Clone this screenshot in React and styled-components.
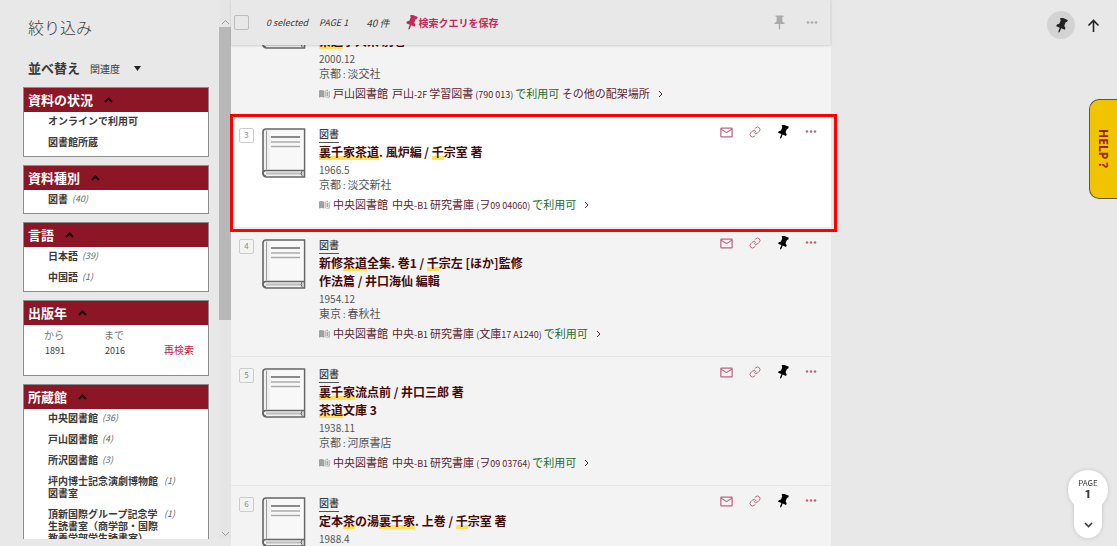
import React from 'react';
import styled, { createGlobalStyle, css } from 'styled-components';
import { MdPushPin, MdMailOutline } from 'react-icons/md';
import { Link as LinkIcon } from 'lucide-react';

const GlobalStyle = createGlobalStyle`
    * {
        box-sizing: border-box;
    }

    body {
        margin: 0;
        background: #e8e8e8;
        color: #3a3a3a;
        font-family: 'Noto Sans CJK JP', 'Noto Sans', sans-serif;
        font-size: 11px;
    }

    button, input, select {
        margin: 0;
        padding: 0;
        border: 0;
        background: none;
        color: inherit;
        font: inherit;
    }

    a {
        color: inherit;
        text-decoration: none;
    }
`;

const Page = styled.div`
    display: grid;
    grid-template-columns: 231px minmax(0, 600px) minmax(0, 1fr);
    height: 100vh;
    overflow: hidden;
`;

/* ---------- sidebar ---------- */

const Sidebar = styled.aside`
    display: flex;
    height: 100vh;
    padding-bottom: 7px;
`;

const Filters = styled.div`
    flex: 1;
    min-width: 0;
    padding: 14px 10px 0 23px;
    overflow: hidden;
`;

const SidebarTitle = styled.h2`
    margin: 0 0 14px 5px;
    font-size: 16px;
    font-weight: 300;
    line-height: 26px;
`;

const SortRow = styled.div`
    display: flex;
    align-items: center;
    gap: 10px;
    height: 26px;
    margin: 0 0 7px 5px;

    label {
        font-size: 13px;
        font-weight: 700;
    }
`;

const SortSelect = styled.span`
    display: flex;
    align-items: center;
    padding-top: 3px;

    select {
        appearance: none;
        width: 44px;
        font-size: 10px;
    }
`;

const Panel = styled.section`
    margin-bottom: 8px;
    border: 1px solid #8c8c8c;
    background: #fff;
`;

const PanelHead = styled.button`
    display: flex;
    align-items: center;
    gap: 11px;
    width: 100%;
    height: 24px;
    padding-left: 4px;
    background: #8c1526;
    color: #fff;
    font-size: 13px;
    font-weight: 700;
    line-height: 24px;

    svg {
        color: #1c0508;
    }
`;

const FacetList = styled.ul`
    display: flex;
    flex-direction: column;
    gap: 9px;
    margin: 0;
    padding: 3px 0 8px 24px;
    list-style: none;
    font-size: 10px;
    line-height: 12px;

    li {
        display: flex;
        gap: 4px;
    }

    a {
        max-width: 112px;
        font-weight: 700;
    }

    em {
        color: #666;
        font-size: 9px;
    }
`;

const YearForm = styled.form`
    display: grid;
    grid-template-columns: 60px 60px 1fr;
    align-items: end;
    height: 50px;
    padding: 2px 0 15px 20px;
    font-size: 10px;

    label {
        display: block;
        color: #777;
        line-height: 15px;
    }

    input {
        display: block;
        width: 40px;
        height: 18px;
        padding-left: 1px;
        font-size: 9px;
        line-height: 18px;
    }

    button {
        justify-self: start;
        color: #b8174c;
        line-height: 20px;
    }
`;

const Scrollbar = styled.div`
    display: flex;
    flex-direction: column;
    align-items: center;
    width: 12px;
    padding: 19px 0 2px;
    background: #e5e5e5;
    color: #999;
`;

const Thumb = styled.div`
    flex: 0 1 293px;
    width: 12px;
    margin: 2px 0 auto;
    background: #b8b8b8;
`;

/* ---------- results ---------- */

const Main = styled.main`
    min-width: 0;
    height: 100vh;
`;

const Toolbar = styled.header`
    position: relative;
    z-index: 2;
    display: flex;
    align-items: center;
    height: 45px;
    padding: 0 12px 0 3px;
    border-right: 1px solid #dcdcdc;
    background: #e8e8e8;
    box-shadow: 0 1px 2px rgba(0, 0, 0, 0.15);
    font-size: 10px;

    input {
        appearance: none;
        width: 15px;
        height: 15px;
        border: 1px solid #bcbcbc;
        border-radius: 2px;
    }
`;

const Status = styled.span`
    margin-left: ${props => props.$gap}px;
    font-size: ${props => (props.$large ? '10px' : '9px')};
    font-style: italic;
`;

const SaveQuery = styled.button`
    display: flex;
    align-items: center;
    margin-left: 14px;
    color: #c22a5c;
    font-weight: 700;
`;

const ToolbarActions = styled.div`
    display: flex;
    align-items: center;
    gap: 18px;
    margin-left: auto;
    color: #aaa;
`;

const IconButton = styled.button`
    display: flex;
    align-items: center;
    justify-content: center;
    height: 16px;
    color: ${props => props.$color || 'inherit'};
`;

// the list is scrolled so that its first record is mostly under the toolbar
const Results = styled.ol`
    margin: -57px 0 0;
    padding: 0;
    list-style: none;
`;

const Record = styled.li`
    position: relative;
    display: grid;
    grid-template-columns: 14px 44px minmax(0, 1fr) auto;
    column-gap: 9px;
    padding: 11px 14px 15px 8px;
    border-bottom: 1px solid #e4e4e4;
    background: #f3f3f3;

    ${props => props.$active && css`
        background: #fff;

        &::after {
            content: '';
            position: absolute;
            z-index: 1;
            inset: -3px -6px -5px -1px;
            border: 3px solid #f00;
            pointer-events: none;
        }
    `}
`;

const RecordNumber = styled.span`
    width: 15px;
    height: 15px;
    border: 1px solid #ccc;
    border-radius: 2px;
    color: #888;
    font-size: 8px;
    line-height: 12px;
    text-align: center;
`;

const RecordBody = styled.div`
    padding-left: 4px;
    line-height: 14px;
`;

const Kind = styled.span`
    display: block;
    width: fit-content;
    height: 15px;
    border-bottom: 1px solid #555;
    font-size: 10px;
    font-weight: 500;
    line-height: 12px;
`;

const Title = styled.h3`
    margin: 0 0 2px;
    color: #450a0a;
    font-size: 12px;
    font-weight: 700;
    line-height: 18px;

    a {
        display: block;
    }

    mark {
        background: linear-gradient(transparent 13px, #ffe25c 13px, #ffe25c 17px, transparent 17px);
        color: inherit;
    }
`;

const Published = styled.div`
    color: #555;
    font-size: ${props => (props.$date ? '10px' : '11px')};
`;

const Latin = styled.span`
    font-size: 9px;
    line-height: 0;
`;

const Location = styled.a`
    display: flex;
    align-items: center;
    gap: 3px;
    height: 16px;
    margin-top: 5px;
    color: #5c2430;
    white-space: pre;

    b {
        color: #256b2c;
        font-weight: 400;
    }

    > svg:last-child {
        margin: 2px 0 0 5px;
    }
`;

const RecordActions = styled.div`
    display: flex;
    align-items: center;
    gap: 15px;
    height: 8px;
`;

/* ---------- right side ---------- */

const Side = styled.div`
    display: flex;
    flex-direction: column;
    align-items: flex-end;
    height: 100vh;
`;

const TopActions = styled.div`
    display: flex;
    align-items: center;
    gap: 12px;
    padding: 11px 17px 0 0;
`;

const RoundButton = styled.button`
    display: flex;
    align-items: center;
    justify-content: center;
    width: 28px;
    height: 28px;
    border-radius: 50%;
    background: #d3d3d3;
    color: #222;
`;

const HelpTab = styled.button`
    width: 28px;
    height: 100px;
    margin-top: 60px;
    border: 1px solid #5f5a35;
    border-right: 0;
    border-radius: 10px 0 0 10px;
    background: #f0c400;
    color: #98241c;
    font-family: 'Open Sans', sans-serif;
    font-size: 12px;
    font-weight: 700;
    writing-mode: vertical-rl;
`;

const Pager = styled.div`
    display: flex;
    flex-direction: column;
    align-items: center;
    margin: auto 9px 8px 0;
    filter: drop-shadow(0 0 2px rgba(0, 0, 0, 0.15));
`;

const PageBadge = styled.div`
    display: flex;
    flex-direction: column;
    align-items: center;
    justify-content: center;
    width: 40px;
    height: 40px;
    border-radius: 50%;
    background: #fff;
    font-size: 8px;
    line-height: 10px;

    strong {
        font-size: 13px;
        line-height: 14px;
    }
`;

const NextPage = styled.button`
    display: flex;
    align-items: flex-end;
    justify-content: center;
    width: 28px;
    height: 40px;
    margin-top: -12px;
    padding-bottom: 10px;
    border-radius: 0 0 14px 14px;
    background: #fff;
`;

/* ---------- icons ---------- */

const Chevron = ({ d, width = 9, height = 6, stroke = 2 }) => (
    <svg width={width} height={height} viewBox={`0 0 ${width} ${height}`} fill="none" stroke="currentColor" strokeWidth={stroke}>
        <path d={d} />
    </svg>
);

const UP = 'M1 5l3.5-3.5L8 5';
const DOWN = 'M1 1l3.5 3.5L8 1';

const Dots = () => (
    <svg width="12" height="4" viewBox="0 0 12 4" fill="currentColor">
        <circle cx="2" cy="1.5" r="1.3" />
        <circle cx="6" cy="1.5" r="1.3" />
        <circle cx="10" cy="1.5" r="1.3" />
    </svg>
);

const PinShape = styled.svg`
    display: block;
    flex: none;
`;

const Pin = ({ size = 14 }) => (
    <PinShape width={size} height={size} viewBox="0 0 14 14" fill="currentColor">
        <g transform="rotate(22 7 7)">
            <path d="M3.500 0h7v2l-1 .5v3.800l1.800 1.500V9.500H7.700V13L7 14.200 6.300 13V9.500H2.700V7.800l1.800-1.500V2.500l-1-.5z" />
        </g>
    </PinShape>
);

const BookCover = () => (
    <svg width="44" height="50" viewBox="0 0 44 50" fill="none" stroke="#666" strokeWidth="1.6">
        <path d="M4 1h38.5v48H4.5C2.5 49 1 47.500 1 45.500V4C1 2.300 2.300 1 4 1z" fill="#f0f0f0" />
        <path d="M8 2h34v40H8z" fill="#fff" fillOpacity="0.5" stroke="none" />
        <path d="M4.500 2.500v39" stroke="#999" strokeWidth="1" />
        <path d="M42 42.500H4c-4 0-4 5.500 0 5.500" />
        <path d="M4 45.500h37" stroke="#bbb" strokeWidth="2" />
        <path d="M40 43l-1 2.500 1.500 3" strokeWidth="1" />
        <path d="M9 9h29" strokeWidth="1.500" />
        <path d="M9 14h29M9 18.500h29" stroke="#aaa" strokeWidth="1.300" />
    </svg>
);

const ShelfIcon = () => (
    <svg width="11" height="9" viewBox="0 0 11 9" fill="#a0a0a0">
        <path d="M0 1.500C1.500.8 3.500.8 5 1.700V8.500C3.500 7.800 1.500 7.800 0 8.500z" />
        <path d="M5.600 1.700l1-.5v6.800l-1 .5zM7.500 3h1.400v4H7.500zM7.500.8h1.400V2.200H7.500zM9.700 2h1v6.500H7.200v-.8h2.500z" />
    </svg>
);

/* ---------- data ---------- */

const availability = [['オンラインで利用可'], ['図書館所蔵']];
const kinds = [['図書', 40]];
const languages = [['日本語', 39], ['中国語', 1]];
const libraries = [
    ['中央図書館', 36],
    ['戸山図書館', 4],
    ['所沢図書館', 3],
    ['坪内博士記念演劇博物館図書室', 1],
    ['頂新国際グループ記念学生読書室（商学部・国際教養学部学生読書室）', 1],
];

// words in square brackets with an asterisk are the matched search terms
const records = [
    { no: 2, titles: ['[*裏千家]茶道', '[*茶道]学大系 別巻'], date: '2000.12', publisher: '京都 : 淡交社', place: '戸山図書館  戸山-2F 学習図書 (790 013) ', more: ' その他の配架場所' },
    { no: 3, titles: ['[*裏千家茶道]. 風炉編 / [*千]宗室 著'], date: '1966.5', publisher: '京都 : 淡交新社', place: '中央図書館  中央-B1 研究書庫 (ヲ09 04060) ', active: true },
    { no: 4, titles: ['新修[*茶道]全集. 巻1 / [*千]宗左 [ほか]監修', '作法篇 / 井口海仙 編輯'], date: '1954.12', publisher: '東京 : 春秋社', place: '中央図書館  中央-B1 研究書庫 (文庫17 A1240) ' },
    { no: 5, titles: ['[*裏千家]流点前 / 井口三郎 著', '[*茶道]文庫 3'], date: '1938.11', publisher: '京都 : 河原書店', place: '中央図書館  中央-B1 研究書庫 (ヲ09 03764) ' },
    { no: 6, titles: ['定本[*茶]の湯[*裏千家]. 上巻 / [*千]宗室 著'], date: '1988.4', publisher: '京都 : 淡交社', place: '中央図書館  中央-B1 研究書庫 ' },
];

const highlight = (text) => text.split(/(\[\*[^\]]+\])/).map((part, idx) => (
    part.startsWith('[*') ? <mark key={idx}>{part.slice(2, -1)}</mark> : part
));

// call numbers and punctuation are set smaller than the Japanese text
const smallLatin = (text) => text.split(/([ -~]+)/).map((part, idx) => (
    idx % 2 ? <Latin key={idx}>{part}</Latin> : part
));

const FacetPanel = ({ title, items, children }) => (
    <Panel>
        <PanelHead type="button" aria-expanded="true">
            {title}
            <Chevron d={UP} />
        </PanelHead>
        {items && (
            <FacetList>
                {items.map(([name, count]) => (
                    <li key={name}>
                        <a href="#">{name}</a>
                        {count && <em>({count})</em>}
                    </li>
                ))}
            </FacetList>
        )}
        {children}
    </Panel>
);

const ResultRecord = ({ record }) => (
    <Record $active={record.active}>
        <RecordNumber>{record.no}</RecordNumber>
        <BookCover />
        <RecordBody>
            <Kind>図書</Kind>
            <Title>
                {record.titles.map((title) => <a href="#" key={title}>{highlight(title)}</a>)}
            </Title>
            <Published $date>{record.date}</Published>
            <Published>{smallLatin(record.publisher)}</Published>
            <Location href="#">
                <ShelfIcon />
                <span>{smallLatin(record.place)}<b>で利用可</b>{record.more}</span>
                <Chevron d="M1 1l3 3-3 3" width={5} height={8} stroke={1} />
            </Location>
        </RecordBody>
        <RecordActions>
            <IconButton $color="#c0677a" aria-label="メール"><MdMailOutline size={15} /></IconButton>
            <IconButton $color="#c0677a" aria-label="リンク"><LinkIcon size={12} /></IconButton>
            <IconButton $color="#000" aria-label="ピン"><Pin /></IconButton>
            <IconButton $color="#c0677a" aria-label="その他"><Dots /></IconButton>
        </RecordActions>
    </Record>
);

export default function App() {
    return (
        <Page>
            <GlobalStyle />
            <Sidebar>
                <Filters>
                    <SidebarTitle>絞り込み</SidebarTitle>
                    <SortRow>
                        <label htmlFor="sort">並べ替え</label>
                        <SortSelect>
                            <select id="sort"><option>関連度</option></select>
                            <svg width="7" height="5" viewBox="0 0 7 5"><path d="M0 0h7L3.500 5z" fill="#222" /></svg>
                        </SortSelect>
                    </SortRow>
                    <FacetPanel title="資料の状況" items={availability} />
                    <FacetPanel title="資料種別" items={kinds} />
                    <FacetPanel title="言語" items={languages} />
                    <FacetPanel title="出版年">
                        <YearForm>
                            <div>
                                <label htmlFor="from">から</label>
                                <input id="from" defaultValue="1891" />
                            </div>
                            <div>
                                <label htmlFor="to">まで</label>
                                <input id="to" defaultValue="2016" />
                            </div>
                            <button type="button">再検索</button>
                        </YearForm>
                    </FacetPanel>
                    <FacetPanel title="所蔵館" items={libraries} />
                </Filters>
                <Scrollbar>
                    <Chevron d={UP} stroke={1} />
                    <Thumb />
                    <Chevron d={DOWN} stroke={1} />
                </Scrollbar>
            </Sidebar>

            <Main>
                <Toolbar>
                    <input type="checkbox" aria-label="すべて選択" />
                    <Status $gap={17}>0 selected</Status>
                    <Status $gap={11}>PAGE 1</Status>
                    <Status $gap={18} $large>40 件</Status>
                    <SaveQuery type="button"><Pin size={15} />検索クエリを保存</SaveQuery>
                    <ToolbarActions>
                        <IconButton aria-label="ピン"><MdPushPin size={17} /></IconButton>
                        <IconButton aria-label="その他"><Dots /></IconButton>
                    </ToolbarActions>
                </Toolbar>
                <Results>
                    {records.map((record) => <ResultRecord key={record.no} record={record} />)}
                </Results>
            </Main>

            <Side>
                <TopActions>
                    <RoundButton aria-label="ピン"><Pin size={15} /></RoundButton>
                    <IconButton aria-label="トップへ">
                        <svg width="13" height="13" viewBox="0 0 13 13" fill="none" stroke="#222" strokeWidth="1.600">
                            <path d="M6.500 13V1.500M1.500 6.500l5-5 5 5" />
                        </svg>
                    </IconButton>
                </TopActions>
                <HelpTab type="button">HELP ?</HelpTab>
                <Pager>
                    <PageBadge>PAGE<strong>1</strong></PageBadge>
                    <NextPage aria-label="次のページ"><Chevron d={DOWN} stroke={1.6} /></NextPage>
                </Pager>
            </Side>
        </Page>
    );
}
